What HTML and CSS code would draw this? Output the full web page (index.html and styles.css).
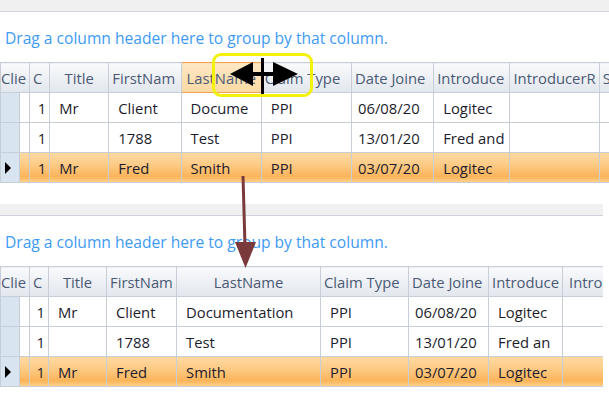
FILE: index.html
```html
<!DOCTYPE html>
<html lang="en">
<head>
    <meta charset="UTF-8">
    <title>Grid column resize</title>
    <link rel="stylesheet" href="styles.css">
</head>
<body>
<div class="page">

    <!-- Avant : colonne LastName en cours de redimensionnement -->
    <div class="panel panel-top">
        <div class="band"></div>
        <div class="group-area">Drag a column header here to group by that column.</div>
        <table class="grid">
            <colgroup>
                <col style="width:19px"><col style="width:10px"><col style="width:20px"><col style="width:59px">
                <col style="width:72px"><col style="width:80px"><col style="width:90px"><col style="width:82px">
                <col style="width:76px"><col style="width:89px"><col style="width:60px">
            </colgroup>
            <thead>
                <tr>
                    <th colspan="2" class="left first">Clie</th>
                    <th class="left">C</th>
                    <th>Title</th>
                    <th class="left">FirstNam</th>
                    <th class="left hot">LastName</th>
                    <th class="left">Claim Type</th>
                    <th class="left">Date Joine</th>
                    <th class="left">Introduce</th>
                    <th class="left">IntroducerR</th>
                    <th class="left">S</th>
                </tr>
            </thead>
            <tbody>
                <tr>
                    <td class="ind"></td><td></td><td class="num">1</td><td>Mr</td><td>Client</td><td>Docume</td>
                    <td>PPI</td><td class="date">06/08/20</td><td>Logitec</td><td></td><td></td>
                </tr>
                <tr>
                    <td class="ind"></td><td></td><td class="num">1</td><td></td><td>1788</td><td>Test</td>
                    <td>PPI</td><td class="date">13/01/20</td><td>Fred and</td><td></td><td></td>
                </tr>
                <tr class="selected">
                    <td class="ind"><span class="arrow"></span></td><td></td><td class="num">1</td><td>Mr</td><td>Fred</td><td>Smith</td>
                    <td>PPI</td><td class="date">03/07/20</td><td>Logitec</td><td></td><td></td>
                </tr>
            </tbody>
        </table>
    </div>

    <!-- Après : colonne élargie -->
    <div class="panel panel-bottom">
        <div class="band"></div>
        <div class="group-area">Drag a column header here to group by that column.</div>
        <table class="grid">
            <colgroup>
                <col style="width:19px"><col style="width:10px"><col style="width:19px"><col style="width:58px">
                <col style="width:70px"><col style="width:144px"><col style="width:88px"><col style="width:80px">
                <col style="width:74px"><col style="width:41px">
            </colgroup>
            <thead>
                <tr>
                    <th colspan="2" class="left first">Clie</th>
                    <th class="left">C</th>
                    <th>Title</th>
                    <th class="left">FirstNam</th>
                    <th>LastName</th>
                    <th class="left">Claim Type</th>
                    <th class="left">Date Joine</th>
                    <th class="left">Introduce</th>
                    <th class="left intro">Intro</th>
                </tr>
            </thead>
            <tbody>
                <tr>
                    <td class="ind"></td><td></td><td class="num">1</td><td>Mr</td><td>Client</td><td>Documentation</td>
                    <td>PPI</td><td class="date">06/08/20</td><td>Logitec</td><td></td>
                </tr>
                <tr>
                    <td class="ind"></td><td></td><td class="num">1</td><td></td><td>1788</td><td>Test</td>
                    <td>PPI</td><td class="date">13/01/20</td><td>Fred an</td><td></td>
                </tr>
                <tr class="selected">
                    <td class="ind"><span class="arrow"></span></td><td></td><td class="num">1</td><td>Mr</td><td>Fred</td><td>Smith</td>
                    <td>PPI</td><td class="date">03/07/20</td><td>Logitec</td><td></td>
                </tr>
            </tbody>
        </table>
    </div>

    <!-- Annotations -->
    <div class="highlight-box"></div>
    <svg class="resize-cursor" width="80" height="44" viewBox="225 55 80 44">
        <polygon points="230,74 253,62 253,86" fill="#000"/>
        <polygon points="298,74 273,62 273,86" fill="#000"/>
        <rect x="252" y="72" width="22" height="4" fill="#000"/>
        <rect x="261" y="58" width="3" height="36" fill="#000"/>
    </svg>
    <svg class="down-arrow" width="30" height="96" viewBox="230 174 30 96">
        <line x1="243" y1="176" x2="245" y2="246" stroke="#7a3a3c" stroke-width="3"/>
        <polygon points="235,242 256,242 245.5,268" fill="#7a3a3c"/>
    </svg>
</div>
</body>
</html>
```
FILE: styles.css
```css
/* Base */
body {
    margin: 0;
    background-color: #ffffff;
    font-family: 'Open Sans', 'Noto Sans', sans-serif;
    font-size: 14.8px;
    color: #1c1c2c;
}

.page {
    position: relative;
    width: 609px;
    height: 398px;
    overflow: hidden;
}

/* Panneaux */
.panel {
    overflow: hidden;
}

.panel-bottom {
    width: 603px;
    margin-top: 21px;
}

.band {
    height: 11px;
    background-color: #f0f0f0;
    border-bottom: 1px solid #cfd4dc;
}

.group-area {
    height: 50px;
    line-height: 52px;
    padding-left: 5px;
    font-size: 15.6px;
    color: #3d9af5;
    white-space: nowrap;
}

/* Grille */
.grid {
    border-collapse: collapse;
    table-layout: fixed;
    width: 660px;
}

.panel-bottom .grid {
    width: 603px;
}

.grid th,
.grid td {
    border: 1px solid #c8ced8;
    white-space: nowrap;
    overflow: hidden;
    padding: 0 0 0 9px;
}

.grid th {
    height: 29px;
    padding: 0 3px;
    font-weight: normal;
    color: #4b5a74;
    text-align: center;
    background: linear-gradient(#f9fafc, #eef1f5 45%, #e2e7ee);
}

.grid th.left {
    text-align: left;
}

.grid th.first {
    padding-left: 0;
}

.grid th.intro {
    padding-left: 6px;
}

.grid th.hot {
    background: linear-gradient(#fde7c4, #fcd9a3);
    border: 1px solid #f0a24e;
    padding-left: 5px;
}

.grid td {
    height: 29px;
}

.grid td.ind {
    background-color: #d9e4f1;
    padding: 0;
}

.grid td.num {
    text-align: right;
    padding: 0 3px 0 0;
}

.grid td.date {
    padding-left: 6px;
}

.grid tr.selected td {
    background: linear-gradient(#fed9a2, #fdca84 40%, #fbb45a 80%, #fdd38c);
}

.grid tr.selected td.ind {
    background: #d9e4f1;
}

.arrow {
    display: block;
    width: 0;
    height: 0;
    margin-left: 4px;
    border-top: 6px solid transparent;
    border-bottom: 6px solid transparent;
    border-left: 6px solid #000;
}

/* Annotations par-dessus la capture */
.highlight-box {
    position: absolute;
    left: 212px;
    top: 53px;
    width: 95px;
    height: 38px;
    border: 3px solid #f4f20a;
    border-radius: 9px;
}

.resize-cursor {
    position: absolute;
    left: 225px;
    top: 55px;
}

.down-arrow {
    position: absolute;
    left: 230px;
    top: 174px;
}
```
